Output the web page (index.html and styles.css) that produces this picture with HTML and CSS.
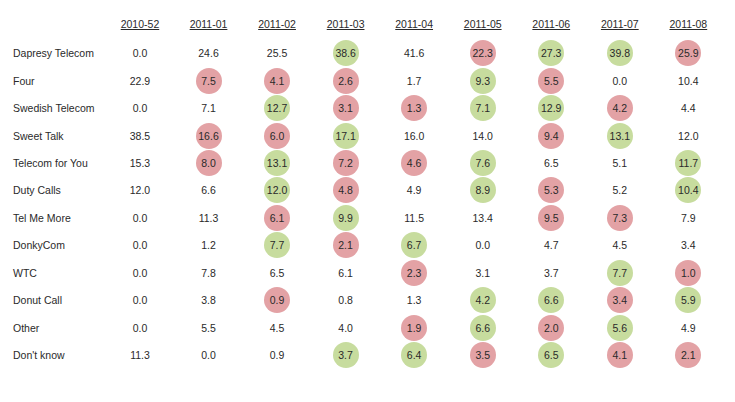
FILE: index.html
```html
<!DOCTYPE html>
<html>
<head>
<meta charset="utf-8">
<link rel="stylesheet" href="styles.css">
</head>
<body>
<div class="table">
  <div class="row head">
    <div class="label"></div>
    <div class="cell"><span class="hd">2010-52</span></div>
    <div class="cell"><span class="hd">2011-01</span></div>
    <div class="cell"><span class="hd">2011-02</span></div>
    <div class="cell"><span class="hd">2011-03</span></div>
    <div class="cell"><span class="hd">2011-04</span></div>
    <div class="cell"><span class="hd">2011-05</span></div>
    <div class="cell"><span class="hd">2011-06</span></div>
    <div class="cell"><span class="hd">2011-07</span></div>
    <div class="cell"><span class="hd">2011-08</span></div>
  </div>
  <div class="row">
    <div class="label">Dapresy Telecom</div>
    <div class="cell"><span>0.0</span></div>
    <div class="cell"><span>24.6</span></div>
    <div class="cell"><span>25.5</span></div>
    <div class="cell"><span class="dot g">38.6</span></div>
    <div class="cell"><span>41.6</span></div>
    <div class="cell"><span class="dot r">22.3</span></div>
    <div class="cell"><span class="dot g">27.3</span></div>
    <div class="cell"><span class="dot g">39.8</span></div>
    <div class="cell"><span class="dot r">25.9</span></div>
  </div>
  <div class="row">
    <div class="label">Four</div>
    <div class="cell"><span>22.9</span></div>
    <div class="cell"><span class="dot r">7.5</span></div>
    <div class="cell"><span class="dot r">4.1</span></div>
    <div class="cell"><span class="dot r">2.6</span></div>
    <div class="cell"><span>1.7</span></div>
    <div class="cell"><span class="dot g">9.3</span></div>
    <div class="cell"><span class="dot r">5.5</span></div>
    <div class="cell"><span>0.0</span></div>
    <div class="cell"><span>10.4</span></div>
  </div>
  <div class="row">
    <div class="label">Swedish Telecom</div>
    <div class="cell"><span>0.0</span></div>
    <div class="cell"><span>7.1</span></div>
    <div class="cell"><span class="dot g">12.7</span></div>
    <div class="cell"><span class="dot r">3.1</span></div>
    <div class="cell"><span class="dot r">1.3</span></div>
    <div class="cell"><span class="dot g">7.1</span></div>
    <div class="cell"><span class="dot g">12.9</span></div>
    <div class="cell"><span class="dot r">4.2</span></div>
    <div class="cell"><span>4.4</span></div>
  </div>
  <div class="row">
    <div class="label">Sweet Talk</div>
    <div class="cell"><span>38.5</span></div>
    <div class="cell"><span class="dot r">16.6</span></div>
    <div class="cell"><span class="dot r">6.0</span></div>
    <div class="cell"><span class="dot g">17.1</span></div>
    <div class="cell"><span>16.0</span></div>
    <div class="cell"><span>14.0</span></div>
    <div class="cell"><span class="dot r">9.4</span></div>
    <div class="cell"><span class="dot g">13.1</span></div>
    <div class="cell"><span>12.0</span></div>
  </div>
  <div class="row">
    <div class="label">Telecom for You</div>
    <div class="cell"><span>15.3</span></div>
    <div class="cell"><span class="dot r">8.0</span></div>
    <div class="cell"><span class="dot g">13.1</span></div>
    <div class="cell"><span class="dot r">7.2</span></div>
    <div class="cell"><span class="dot r">4.6</span></div>
    <div class="cell"><span class="dot g">7.6</span></div>
    <div class="cell"><span>6.5</span></div>
    <div class="cell"><span>5.1</span></div>
    <div class="cell"><span class="dot g">11.7</span></div>
  </div>
  <div class="row">
    <div class="label">Duty Calls</div>
    <div class="cell"><span>12.0</span></div>
    <div class="cell"><span>6.6</span></div>
    <div class="cell"><span class="dot g">12.0</span></div>
    <div class="cell"><span class="dot r">4.8</span></div>
    <div class="cell"><span>4.9</span></div>
    <div class="cell"><span class="dot g">8.9</span></div>
    <div class="cell"><span class="dot r">5.3</span></div>
    <div class="cell"><span>5.2</span></div>
    <div class="cell"><span class="dot g">10.4</span></div>
  </div>
  <div class="row">
    <div class="label">Tel Me More</div>
    <div class="cell"><span>0.0</span></div>
    <div class="cell"><span>11.3</span></div>
    <div class="cell"><span class="dot r">6.1</span></div>
    <div class="cell"><span class="dot g">9.9</span></div>
    <div class="cell"><span>11.5</span></div>
    <div class="cell"><span>13.4</span></div>
    <div class="cell"><span class="dot r">9.5</span></div>
    <div class="cell"><span class="dot r">7.3</span></div>
    <div class="cell"><span>7.9</span></div>
  </div>
  <div class="row">
    <div class="label">DonkyCom</div>
    <div class="cell"><span>0.0</span></div>
    <div class="cell"><span>1.2</span></div>
    <div class="cell"><span class="dot g">7.7</span></div>
    <div class="cell"><span class="dot r">2.1</span></div>
    <div class="cell"><span class="dot g">6.7</span></div>
    <div class="cell"><span>0.0</span></div>
    <div class="cell"><span>4.7</span></div>
    <div class="cell"><span>4.5</span></div>
    <div class="cell"><span>3.4</span></div>
  </div>
  <div class="row">
    <div class="label">WTC</div>
    <div class="cell"><span>0.0</span></div>
    <div class="cell"><span>7.8</span></div>
    <div class="cell"><span>6.5</span></div>
    <div class="cell"><span>6.1</span></div>
    <div class="cell"><span class="dot r">2.3</span></div>
    <div class="cell"><span>3.1</span></div>
    <div class="cell"><span>3.7</span></div>
    <div class="cell"><span class="dot g">7.7</span></div>
    <div class="cell"><span class="dot r">1.0</span></div>
  </div>
  <div class="row">
    <div class="label">Donut Call</div>
    <div class="cell"><span>0.0</span></div>
    <div class="cell"><span>3.8</span></div>
    <div class="cell"><span class="dot r">0.9</span></div>
    <div class="cell"><span>0.8</span></div>
    <div class="cell"><span>1.3</span></div>
    <div class="cell"><span class="dot g">4.2</span></div>
    <div class="cell"><span class="dot g">6.6</span></div>
    <div class="cell"><span class="dot r">3.4</span></div>
    <div class="cell"><span class="dot g">5.9</span></div>
  </div>
  <div class="row">
    <div class="label">Other</div>
    <div class="cell"><span>0.0</span></div>
    <div class="cell"><span>5.5</span></div>
    <div class="cell"><span>4.5</span></div>
    <div class="cell"><span>4.0</span></div>
    <div class="cell"><span class="dot r">1.9</span></div>
    <div class="cell"><span class="dot g">6.6</span></div>
    <div class="cell"><span class="dot r">2.0</span></div>
    <div class="cell"><span class="dot g">5.6</span></div>
    <div class="cell"><span>4.9</span></div>
  </div>
  <div class="row">
    <div class="label">Don't know</div>
    <div class="cell"><span>11.3</span></div>
    <div class="cell"><span>0.0</span></div>
    <div class="cell"><span>0.9</span></div>
    <div class="cell"><span class="dot g">3.7</span></div>
    <div class="cell"><span class="dot g">6.4</span></div>
    <div class="cell"><span class="dot r">3.5</span></div>
    <div class="cell"><span class="dot g">6.5</span></div>
    <div class="cell"><span class="dot r">4.1</span></div>
    <div class="cell"><span class="dot r">2.1</span></div>
  </div>
</div>
</body>
</html>
```
FILE: styles.css
```css
html, body {
  margin: 0;
  padding: 0;
  background: #ffffff;
}
body {
  font-family: "Liberation Sans", Arial, sans-serif;
  font-size: 10.5px;
  color: #2a2a2a;
}
.table {
  padding: 9px 0 0 13px;
}
.row {
  display: grid;
  grid-template-columns: 92.7px repeat(9, 68.56px);
  height: 27.45px;
  align-items: center;
}
.row.head {
  height: 30.5px;
}
.label {
  white-space: nowrap;
}
.cell {
  display: flex;
  justify-content: center;
  align-items: center;
}
.hd {
  text-decoration: underline;
  text-underline-offset: 1px;
}
.dot {
  display: flex;
  align-items: center;
  justify-content: center;
  width: 26px;
  height: 26px;
  border-radius: 50%;
}
.dot.r {
  background: #e3a2a5;
}
.dot.g {
  background: #c7dc9e;
}
```
